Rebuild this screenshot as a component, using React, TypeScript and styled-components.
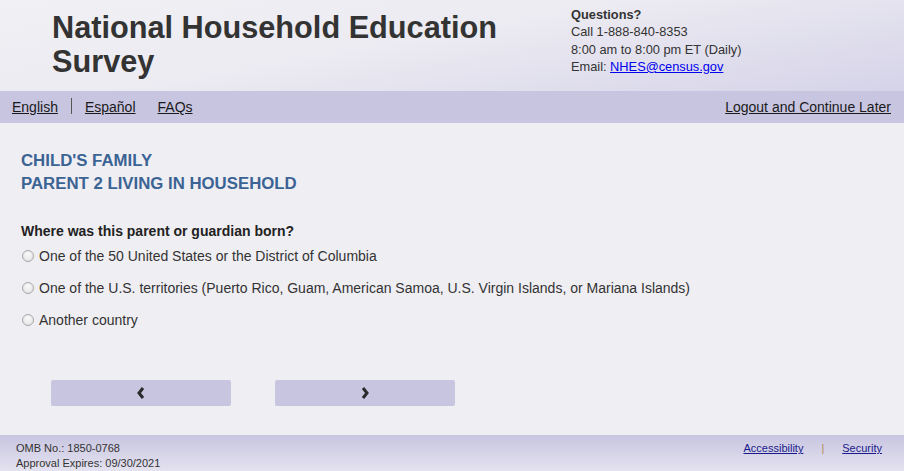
import styled, { createGlobalStyle } from "styled-components";

const GlobalStyle = createGlobalStyle`
  html, body {
    margin: 0;
    padding: 0;
    background: #efeef3;
    font-family: "Liberation Sans", Arial, sans-serif;
    color: #222;
  }
`;

const options = [
  "One of the 50 United States or the District of Columbia",
  "One of the U.S. territories (Puerto Rico, Guam, American Samoa, U.S. Virgin Islands, or Mariana Islands)",
  "Another country",
];

export default function App() {
  return (
    <Page>
      <GlobalStyle />
      <Header>
        <Title>National Household Education Survey</Title>
        <Contact>
          <strong>Questions?</strong>
          <span>Call 1-888-840-8353</span>
          <span>8:00 am to 8:00 pm ET (Daily)</span>
          <span>
            Email: <MailLink href="#">NHES@census.gov</MailLink>
          </span>
        </Contact>
      </Header>
      <NavBar>
        <NavGroup>
          <NavLink href="#">English</NavLink>
          <NavDivider />
          <NavLink href="#">Español</NavLink>
          <NavLink href="#" $gap={22}>FAQs</NavLink>
        </NavGroup>
        <NavLink href="#">Logout and Continue Later</NavLink>
      </NavBar>
      <Main>
        <SectionTitle>CHILD'S FAMILY</SectionTitle>
        <SectionTitle>PARENT 2 LIVING IN HOUSEHOLD</SectionTitle>
        <Question>Where was this parent or guardian born?</Question>
        {options.map((label) => (
          <Option key={label}>
            <Radio type="radio" name="born" />
            <span>{label}</span>
          </Option>
        ))}
        <ButtonRow>
          <NavButton aria-label="Previous">
            <Chevron dir="left" />
          </NavButton>
          <NavButton aria-label="Next">
            <Chevron dir="right" />
          </NavButton>
        </ButtonRow>
      </Main>
      <Footer>
        <FooterInfo>
          <span>OMB No.: 1850-0768</span>
          <span>Approval Expires: 09/30/2021</span>
        </FooterInfo>
        <FooterLinks>
          <FooterLink href="#">Accessibility</FooterLink>
          <FooterSep>|</FooterSep>
          <FooterLink href="#">Security</FooterLink>
        </FooterLinks>
      </Footer>
    </Page>
  );
}

function Chevron({ dir }: { dir: "left" | "right" }) {
  const d = dir === "left" ? "M7 1 L3 6 L7 11" : "M3 1 L7 6 L3 11";
  return (
    <svg width="10" height="12" viewBox="0 0 10 12">
      <path d={d} fill="none" stroke="#2b2b2b" strokeWidth="3" strokeLinejoin="miter" />
    </svg>
  );
}

const Page = styled.div`
  width: 904px;
  height: 471px;
  display: flex;
  flex-direction: column;
  overflow: hidden;
`;

const Header = styled.header`
  height: 91px;
  box-sizing: border-box;
  display: flex;
  justify-content: space-between;
  padding: 0 0 0 52px;
  background: linear-gradient(170deg, #f1f0f4 0%, #ecebf2 45%, #d5d3e8 100%);
`;

const Title = styled.h1`
  margin: 0;
  width: 480px;
  padding-top: 11px;
  font-size: 30.7px;
  line-height: 34px;
  font-weight: bold;
  color: #333;
`;

const Contact = styled.div`
  width: 333px;
  padding-top: 6px;
  display: flex;
  flex-direction: column;
  font-size: 12.8px;
  line-height: 17.3px;
  color: #333;

  strong {
    font-weight: bold;
  }
`;

const MailLink = styled.a`
  color: #0000ee;
`;

const NavBar = styled.nav`
  height: 32px;
  display: flex;
  align-items: center;
  justify-content: space-between;
  padding: 0 13px 0 12px;
  background: #c8c5e1;
  font-size: 14px;
`;

const NavGroup = styled.div`
  display: flex;
  align-items: center;
`;

const NavLink = styled.a<{ $gap?: number }>`
  color: #1a1a1a;
  margin-left: ${(p) => p.$gap ?? 0}px;
`;

const NavDivider = styled.span`
  display: inline-block;
  width: 1px;
  height: 16px;
  background: #555;
  margin: 0 13px 2px 13px;
`;

const Main = styled.main`
  flex: 1;
  padding: 26px 0 0 21px;
  display: flex;
  flex-direction: column;
`;

const SectionTitle = styled.h2`
  margin: 0;
  font-size: 16.8px;
  line-height: 23px;
  font-weight: bold;
  color: #3b6393;
`;

const Question = styled.div`
  margin: 27px 0 0;
  font-size: 14px;
  line-height: 18px;
  font-weight: bold;
  color: #222;
`;

const Option = styled.label`
  display: flex;
  align-items: center;
  height: 32px;
  font-size: 14px;
  color: #333;
`;

const Radio = styled.input`
  appearance: none;
  width: 12px;
  height: 12px;
  margin: 0 5px 0 1px;
  border-radius: 50%;
  border: 1px solid #a8a8a8;
  background: radial-gradient(circle at 50% 35%, #fafafa, #dedede);
  box-sizing: border-box;
`;

const ButtonRow = styled.div`
  display: flex;
  gap: 44px;
  margin: 44px 0 0 30px;
`;

const NavButton = styled.button`
  width: 180px;
  height: 26px;
  border: none;
  border-radius: 2px;
  background: #c8c5e1;
  display: flex;
  align-items: center;
  justify-content: center;
  padding: 0;
`;

const Footer = styled.footer`
  height: 36px;
  display: flex;
  justify-content: space-between;
  align-items: flex-start;
  padding: 6px 22px 0 16px;
  box-sizing: border-box;
  background: linear-gradient(180deg, #c8c5e1 0%, #e4e2ef 100%);
  font-size: 11px;
  color: #333;
`;

const FooterInfo = styled.div`
  display: flex;
  flex-direction: column;
  line-height: 15px;
`;

const FooterLinks = styled.div`
  display: flex;
  line-height: 15px;
`;

const FooterLink = styled.a`
  color: #1a1a8c;
`;

const FooterSep = styled.span`
  color: #b08a5a;
  margin: 0 18px;
`;
